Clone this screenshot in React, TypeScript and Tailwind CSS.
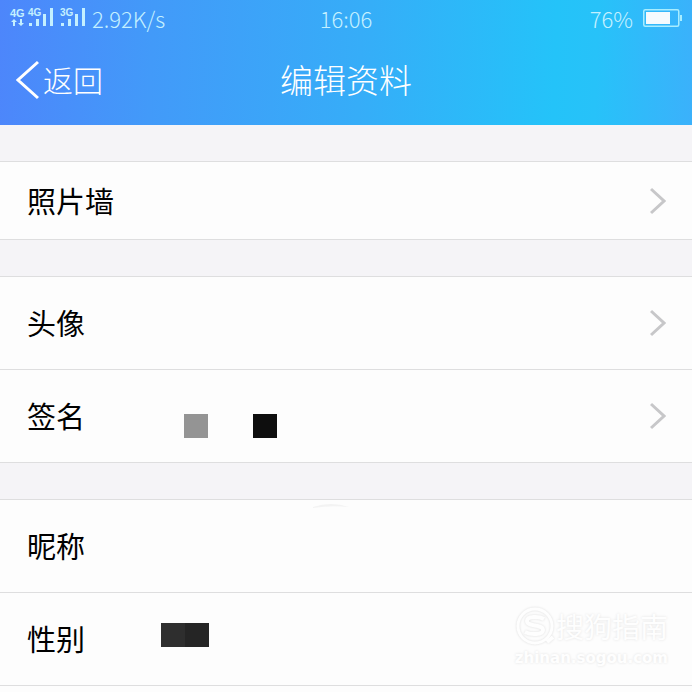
import React from "react";

interface RowProps {
  label: string;
  short?: boolean;
  arrow?: boolean;
  children?: React.ReactNode;
}

const Signal = ({ name }: { name: string }) => (
  <div className="relative h-5 w-6">
    <span className="absolute left-0 top-0 font-['Liberation_Sans',sans-serif] text-[10px] font-bold leading-[9px]">
      {name}
    </span>
    <svg width="25" height="20" viewBox="0 0 25 20" fill="currentColor" aria-hidden="true">
      <rect x="1" y="15" width="3" height="3" />
      <rect x="8" y="11" width="3" height="7" />
      <rect x="15" y="6" width="3" height="12" />
      <rect x="22" y="0" width="3" height="18" />
    </svg>
  </div>
);

const StatusBar = () => (
  <div className="grid h-9 grid-cols-3 items-center px-[10px] text-[22px] font-light text-[#c4f0ff]">
    <div className="flex items-center whitespace-nowrap">
      <div className="flex h-5 w-[18px] flex-col">
        <span className="font-['Liberation_Sans',sans-serif] text-[11px] font-bold leading-[10px]">4G</span>
        <svg width="13" height="7" viewBox="0 0 13 7" fill="currentColor" className="mt-px ml-px" aria-hidden="true">
          <path d="M3 0 6 3H4v4H2V3H0zM10 7 7 4h2V0h2v4h2z" />
        </svg>
      </div>
      <Signal name="4G" />
      <div className="w-2" />
      <Signal name="3G" />
      <span className="ml-2">2.92K/s</span>
    </div>
    <span className="text-center">16:06</span>
    <div className="flex items-center justify-end gap-[10px]">
      <span>76%</span>
      <svg width="39" height="18" viewBox="0 0 39 18" aria-hidden="true">
        <rect x="0.75" y="0.75" width="35" height="16.5" rx="1.5" fill="none" stroke="#a8edff" strokeWidth="1.5" />
        <rect x="3" y="3" width="24" height="12" fill="#f4fafe" />
        <rect x="37" y="6" width="2" height="6" fill="#a8edff" />
      </svg>
    </div>
  </div>
);

const Row = ({ label, short, arrow, children }: RowProps) => {
  const content = (
    <>
      <span className="w-[134px] shrink-0 text-left">{label}</span>
      <span className="flex flex-1">{children}</span>
      {arrow && (
        <svg width="16" height="28" viewBox="0 0 16 28" fill="none" stroke="#c7c7c9" strokeWidth="3" aria-hidden="true">
          <path d="M1 2 14 14 1 26" />
        </svg>
      )}
    </>
  );
  const className = `flex w-full items-center border-b border-[#dededf] pl-[27px] pr-[26px] ${short ? "h-[78px]" : "h-[93px]"}`;

  return arrow ? (
    <button type="button" className={className}>
      {content}
    </button>
  ) : (
    <div className={className}>{content}</div>
  );
};

const Group = ({ children }: { children: React.ReactNode }) => (
  <section className="mt-9 border-t border-[#dededf] bg-[#fdfdfd]">{children}</section>
);

const Watermark = () => (
  <div
    className="absolute bottom-4 right-6 flex flex-col items-end text-[#fefefe] [text-shadow:0_0_3px_#e2e2e2]"
    aria-hidden="true"
  >
    <div className="flex items-center gap-px">
      <svg width="40" height="40" viewBox="0 0 40 40" fill="none" className="drop-shadow-[0_0_1px_#dcdcdc]">
        <circle cx="20" cy="20" r="17" stroke="#fefefe" strokeWidth="3" />
        <path
          d="M29 13c-5-3-17-3-17 2 0 6 16 3 16 9 0 5-12 5-18 2M32 36l6-5"
          stroke="#fefefe"
          strokeWidth="4"
        />
      </svg>
      <span className="text-[28px] leading-10">搜狗指南</span>
    </div>
    <span className="font-['DejaVu_Sans',sans-serif] text-[15px] font-bold leading-6">zhinan.sogou.com</span>
  </div>
);

export default function App() {
  return (
    <div className="flex min-h-screen flex-col bg-[#f5f4f7] font-['Noto_Sans_CJK_SC',sans-serif] text-black">
      <header className="h-[125px] bg-[linear-gradient(92deg,#4d86fb_0%,#429af9_22%,#36adf8_52%,#24c3f9_80%,#27c2f9_86%,#3bb1fb_100%)] text-white">
        <StatusBar />
        <div className="grid h-[87px] grid-cols-[1fr_auto_1fr] items-center font-light">
          <button type="button" className="flex items-center gap-1 pl-4 text-[30px]">
            <svg width="23" height="40" viewBox="0 0 23 40" fill="none" stroke="white" strokeWidth="3" aria-hidden="true">
              <path d="M22 2 2 20 22 38" />
            </svg>
            返回
          </button>
          <h1 className="text-[33px]">编辑资料</h1>
        </div>
      </header>

      <main className="flex grow flex-col text-[29px]">
        <Group>
          <Row label="照片墙" short arrow />
        </Group>

        <Group>
          <Row label="头像" arrow />
          <Row label="签名" arrow>
            <span className="ml-[23px] mt-5 size-6 bg-[#949494]" />
            <span className="ml-[45px] mt-5 size-6 bg-[#0e0e0e]" />
          </Row>
        </Group>

        <div className="relative">
          <Group>
            <Row label="昵称" />
            <Row label="性别">
              <span className="mb-2 size-6 bg-[#2e2e2e]" />
              <span className="mb-2 size-6 bg-[#252525]" />
            </Row>
          </Group>
          <svg
            width="36"
            height="4"
            viewBox="0 0 36 4"
            fill="#f3f3f3"
            className="absolute left-1/2 top-[41px] -ml-[33px]"
            aria-hidden="true"
          >
            <path d="M0 3Q18-3 36 3Q18 1 0 4z" />
          </svg>
          <Watermark />
        </div>
        <div className="grow bg-[#fdfdfd]" />
      </main>
    </div>
  );
}
